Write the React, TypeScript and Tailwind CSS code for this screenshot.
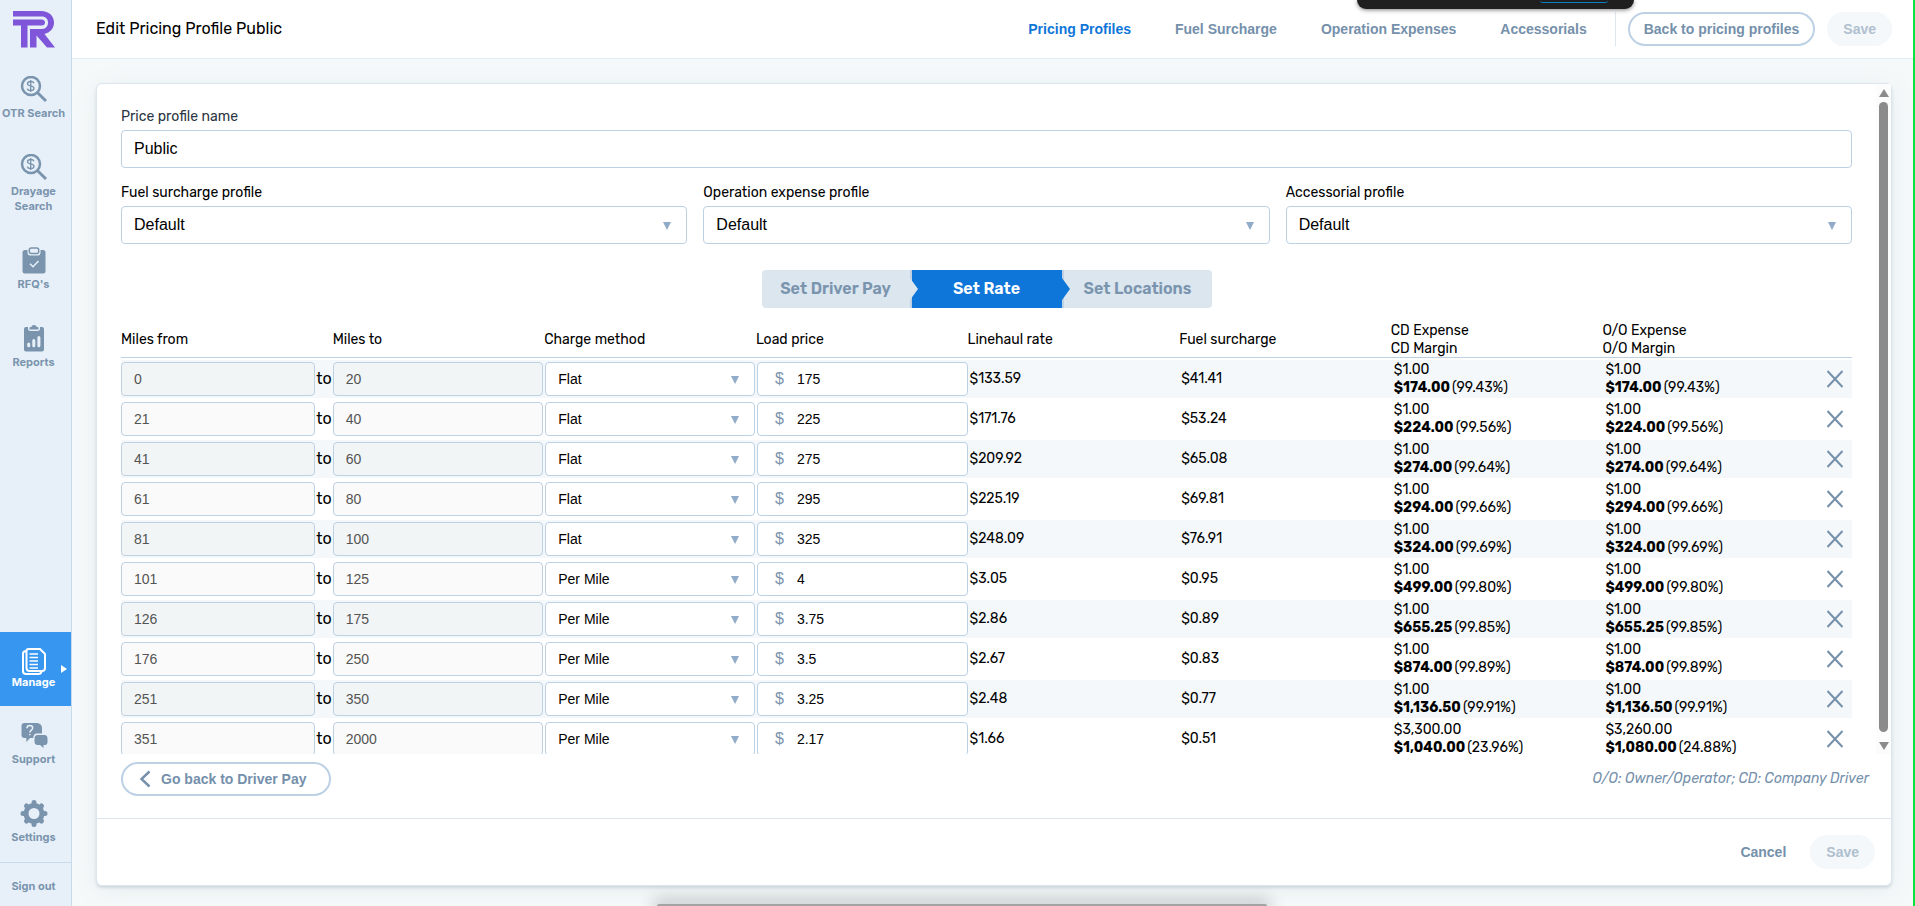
import type { ReactNode } from "react";

const NAV_LINKS = [
  { label: "Pricing Profiles", active: true },
  { label: "Fuel Surcharge", active: false },
  { label: "Operation Expenses", active: false },
  { label: "Accessorials", active: false },
];

const PROFILE_SELECTS = [
  { id: "fuel-profile", label: "Fuel surcharge profile" },
  { id: "operation-profile", label: "Operation expense profile" },
  { id: "accessorial-profile", label: "Accessorial profile" },
];

const ROWS = [
  { from: 0, to: 20, method: "Flat", price: "175", linehaul: "$133.59", fuel: "$41.41", cd: ["$1.00", "$174.00", "99.43%"], oo: ["$1.00", "$174.00", "99.43%"] },
  { from: 21, to: 40, method: "Flat", price: "225", linehaul: "$171.76", fuel: "$53.24", cd: ["$1.00", "$224.00", "99.56%"], oo: ["$1.00", "$224.00", "99.56%"] },
  { from: 41, to: 60, method: "Flat", price: "275", linehaul: "$209.92", fuel: "$65.08", cd: ["$1.00", "$274.00", "99.64%"], oo: ["$1.00", "$274.00", "99.64%"] },
  { from: 61, to: 80, method: "Flat", price: "295", linehaul: "$225.19", fuel: "$69.81", cd: ["$1.00", "$294.00", "99.66%"], oo: ["$1.00", "$294.00", "99.66%"] },
  { from: 81, to: 100, method: "Flat", price: "325", linehaul: "$248.09", fuel: "$76.91", cd: ["$1.00", "$324.00", "99.69%"], oo: ["$1.00", "$324.00", "99.69%"] },
  { from: 101, to: 125, method: "Per Mile", price: "4", linehaul: "$3.05", fuel: "$0.95", cd: ["$1.00", "$499.00", "99.80%"], oo: ["$1.00", "$499.00", "99.80%"] },
  { from: 126, to: 175, method: "Per Mile", price: "3.75", linehaul: "$2.86", fuel: "$0.89", cd: ["$1.00", "$655.25", "99.85%"], oo: ["$1.00", "$655.25", "99.85%"] },
  { from: 176, to: 250, method: "Per Mile", price: "3.5", linehaul: "$2.67", fuel: "$0.83", cd: ["$1.00", "$874.00", "99.89%"], oo: ["$1.00", "$874.00", "99.89%"] },
  { from: 251, to: 350, method: "Per Mile", price: "3.25", linehaul: "$2.48", fuel: "$0.77", cd: ["$1.00", "$1,136.50", "99.91%"], oo: ["$1.00", "$1,136.50", "99.91%"] },
  { from: 351, to: 2000, method: "Per Mile", price: "2.17", linehaul: "$1.66", fuel: "$0.51", cd: ["$3,300.00", "$1,040.00", "23.96%"], oo: ["$3,260.00", "$1,080.00", "24.88%"] },
];

function Logo() {
  return (
    <svg viewBox="0 0 42 37" className="h-[37px] w-[42px]" fill="#7f56d9" aria-hidden="true">
      <path d="M0 0H28C36 0 41 5 41 11.5C41 17.5 37 21.5 31.5 23L42 36.5H34L23.5 24.5V36.5H17V18H29C33 18 35 15 35 11.5C35 8 32.5 5.5 29 5.5H0Z" />
      <path d="M0 8.5H28.5C31 8.5 32 10 32 11.5C32 13.5 31 14.5 28.5 14.5H14.5V36.5H8V14.5H0Z" />
    </svg>
  );
}

function SearchDollarIcon() {
  return (
    <svg viewBox="0 0 28 28" className="h-7 w-7" fill="none" stroke="currentColor" aria-hidden="true">
      <circle cx="11" cy="10" r="9" strokeWidth="2.5" />
      <path d="M17.6 16.8L26 25" strokeWidth="3" />
      <path d="M10.7 4V16M14 7.2C13.6 6 12.3 5.5 10.7 5.5C8.8 5.5 7.5 6.3 7.5 7.7C7.5 10.7 14 9.2 14 12.3C14 13.8 12.6 14.6 10.7 14.6C9 14.6 7.6 13.9 7.3 12.6" strokeWidth="1.3" />
    </svg>
  );
}

function ClipboardCheckIcon() {
  return (
    <svg viewBox="0 0 28 28" className="h-7 w-7" aria-hidden="true">
      <rect x="2.5" y="3" width="23" height="23.5" rx="2.5" fill="currentColor" />
      <rect x="7.5" y="-1" width="13" height="9.5" rx="3" fill="#e7f0f8" />
      <rect x="9.3" y="1.1" width="9.4" height="5.3" rx="2" fill="none" stroke="currentColor" strokeWidth="1.5" />
      <path d="M10 16.8L13 19.7L18.5 14" fill="none" stroke="#e7f0f8" strokeWidth="1.5" />
    </svg>
  );
}

function ClipboardChartIcon() {
  return (
    <svg viewBox="0 0 28 28" className="h-7 w-7" aria-hidden="true">
      <rect x="4" y="2" width="20" height="24.5" rx="2" fill="currentColor" />
      <path d="M8 0H20V3.5Q20 6 17.5 6H10.5Q8 6 8 3.5Z" fill="#e7f0f8" />
      <path d="M9.5 4.5V3Q9.5 2 10.5 2H11.3Q11.7 0 14 0T16.7 2H17.5Q18.5 2 18.5 3V4.5Z" fill="currentColor" />
      <path d="M8.7 19V20.7M13.8 15.5V20.7M18.9 12.5V20.7" stroke="#e7f0f8" strokeWidth="3" strokeLinecap="round" />
    </svg>
  );
}

function DocumentsIcon() {
  return (
    <svg viewBox="0 0 28 28" className="h-7 w-7" fill="none" stroke="currentColor" strokeWidth="2" aria-hidden="true">
      <path d="M8.5 1H20L25 6V20Q25 23 22 23H9.5Q6.5 23 6.5 20V3Q6.5 1 8.5 1Z" />
      <path d="M6.5 3Q3 3 3 5.5V23Q3 26 6 26H18.5Q21 26 21.5 23.5" />
      <path d="M9.5 6H18M9.5 9.5H18M9.5 13H18M9.5 16.5H18M9.5 20H18" strokeWidth="1.6" />
    </svg>
  );
}

function SupportIcon() {
  return (
    <svg viewBox="0 0 28 28" className="h-7 w-7" fill="currentColor" aria-hidden="true">
      <path d="M4.5 1H17.5Q22 2 22 6V11.5H16Q13.5 12 13.2 16H10L6.3 20V16H4.5Q1.5 16 1.5 13V4Q1.5 1 4.5 1Z" />
      <path d="M17 13H25Q27.5 13.5 27.5 16V20Q27.5 23 25 23H23.5V26L20 23H17Q14.5 22.5 14.5 20V16Q14.5 13.5 17 13Z" />
      <path d="M7 6.2C7 4.2 8.2 3.5 9.8 3.5C11.5 3.5 12.7 4.5 12.7 6C12.7 8 10 8.2 9.8 10.5M9.8 12V13.3" fill="none" stroke="#e7f0f8" strokeWidth="1.5" />
    </svg>
  );
}

function GearIcon() {
  return (
    <svg viewBox="0 0 28 28" className="h-7 w-7" fill="none" stroke="currentColor" aria-hidden="true">
      <circle cx="14" cy="13.5" r="8" strokeWidth="5" />
      <g strokeWidth="5" strokeLinecap="round">
        <path d="M14 2.5V4M14 23V24.5M3 13.5H4.5M23.5 13.5H25" />
        <path d="M6.5 6L7 6.5M21 20.5L21.5 21M6.5 21L7 20.5M21 6.5L21.5 6" />
      </g>
    </svg>
  );
}

function SideItem({ icon, label }: { icon: ReactNode; label: string }) {
  return (
    <a href="#" className="flex flex-col items-center pt-4 pr-1 pb-[17px] text-center">
      {icon}
      <span className="mt-0.5 leading-[15px]">{label}</span>
    </a>
  );
}

function Sidebar() {
  return (
    <nav className="flex w-[72px] shrink-0 flex-col border-r border-[#c9dbe9] bg-[#e7f0f8] font-['Inter',sans-serif] text-[11px] font-bold text-[#7a94ae]">
      <a href="#" aria-label="Home" className="flex h-[60px] justify-center pt-[11px] pr-1">
        <Logo />
      </a>
      <SideItem icon={<SearchDollarIcon />} label="OTR Search" />
      <SideItem icon={<SearchDollarIcon />} label="Drayage Search" />
      <SideItem icon={<ClipboardCheckIcon />} label="RFQ's" />
      <SideItem icon={<ClipboardChartIcon />} label="Reports" />
      <div className="mt-auto">
        <a href="#" className="relative flex h-[74px] flex-col items-center bg-[#3797f0] pt-4 pr-1 text-white">
          <DocumentsIcon />
          <span className="-mt-px leading-[15px]">Manage</span>
          <span className="absolute top-[33px] right-1 border-y-4 border-l-[6px] border-y-transparent border-l-white" />
        </a>
        <SideItem icon={<SupportIcon />} label="Support" />
        <SideItem icon={<GearIcon />} label="Settings" />
        <a href="#" className="flex h-11 items-center justify-center border-t border-[#c9dbe9] pt-1 pr-1">
          Sign out
        </a>
      </div>
    </nav>
  );
}

function Caret() {
  return (
    <span className="pointer-events-none absolute top-1/2 right-4 -mt-[3px] border-x-4 border-t-8 border-x-transparent border-t-[#8fabc7]" />
  );
}

function Header() {
  return (
    <header className="flex h-[59px] shrink-0 items-center border-b border-[#e3edf6] bg-white pr-[23px] pl-6">
      <h1 className="text-base">Edit Pricing Profile Public</h1>
      <nav className="ml-auto flex gap-11 font-['Liberation_Sans',Arial,sans-serif] text-sm font-bold text-[#7590ab]">
        {NAV_LINKS.map((l) => (
          <a key={l.label} href="#" className={l.active ? "text-[#0f76d9]" : ""}>
            {l.label}
          </a>
        ))}
      </nav>
      <div className="ml-7 flex gap-3 border-l border-[#dce6ef] pl-3 font-['Liberation_Sans',Arial,sans-serif] text-sm font-bold">
        <button className="h-[34px] rounded-full border-2 border-[#bdd1e5] px-3.5 text-[#7590ab]">
          Back to pricing profiles
        </button>
        <button className="h-[34px] rounded-full bg-[#f4f8fa] px-4 text-[#b0bfcf]">Save</button>
      </div>
    </header>
  );
}

function Steps() {
  return (
    <div className="mx-auto mt-[26px] grid h-[38px] w-[450px] grid-cols-3 overflow-hidden rounded text-base font-semibold">
      <button className="border-r-2 border-[#bfd1e2] bg-[#dbe6ef] text-[#7a94ae]">Set Driver Pay</button>
      <button className="relative bg-[#0f76d9] text-white">
        Set Rate
        <span className="absolute top-2 -left-0.5 border-y-[11px] border-l-[8px] border-y-transparent border-l-[#dbe6ef]" />
        <span className="absolute top-2 -right-2 z-10 border-y-[11px] border-l-8 border-y-transparent border-l-[#0f76d9]" />
      </button>
      <button className="border-l-2 border-[#bfd1e2] bg-[#dbe6ef] text-[#7a94ae]">Set Locations</button>
    </div>
  );
}

function Margin({ values }: { values: string[] }) {
  return (
    <>
      {values[0]}
      <br />
      <b className="mr-0.5">{values[1]}</b>({values[2]})
    </>
  );
}

function RateTable() {
  return (
    <table className="mt-3 w-full table-fixed border-separate border-spacing-x-0 border-spacing-y-0.5 text-left text-sm leading-[18px]">
      <thead>
        <tr className="[&>th]:h-9 [&>th]:font-normal [&>th]:shadow-[inset_0_-1px_0_#bdd1e5]">
          <th>Miles from</th>
          <th>Miles to</th>
          <th>Charge method</th>
          <th>Load price</th>
          <th>Linehaul rate</th>
          <th>Fuel surcharge</th>
          <th>CD Expense<br />CD Margin</th>
          <th>O/O Expense<br />O/O Margin</th>
          <th className="w-[38px]" aria-label="Remove" />
        </tr>
      </thead>
      <tbody>
        {ROWS.map((r) => (
          <tr key={r.from} className="h-[38px] odd:bg-[#f4f8fa]">
            <td>
              <div className="flex items-center">
                <input
                  disabled
                  aria-label="Miles from"
                  defaultValue={r.from}
                  className="h-[34px] w-0 flex-1 rounded border border-[#bdd1e5] bg-[#efefef]/30 px-3 font-['Liberation_Sans',Arial,sans-serif] text-[#545454]"
                />
                <span className="px-px text-base">to</span>
              </div>
            </td>
            <td className="pr-px">
              <input
                disabled
                aria-label="Miles to"
                defaultValue={r.to}
                className="block h-[34px] w-full rounded border border-[#bdd1e5] bg-[#efefef]/30 px-3 font-['Liberation_Sans',Arial,sans-serif] text-[#545454]"
              />
            </td>
            <td className="px-px">
              <div className="relative">
                <select
                  aria-label="Charge method"
                  defaultValue={r.method}
                  className="block h-[34px] w-full appearance-none rounded border border-[#bdd1e5] bg-white px-3 font-['Liberation_Sans',Arial,sans-serif]"
                >
                  <option>Flat</option>
                  <option>Per Mile</option>
                </select>
                <Caret />
              </div>
            </td>
            <td className="pl-px">
              <label className="flex h-[34px] items-center rounded border border-[#bdd1e5] bg-white pl-[17px] font-['Liberation_Sans',Arial,sans-serif]">
                <span className="w-[22px] text-base text-[#7a94ae]">$</span>
                <input aria-label="Load price" defaultValue={r.price} className="w-0 flex-1 outline-none" />
              </label>
            </td>
            <td className="pl-0.5">{r.linehaul}</td>
            <td className="pl-0.5">{r.fuel}</td>
            <td className="pl-[3px]"><Margin values={r.cd} /></td>
            <td className="pl-[3px]"><Margin values={r.oo} /></td>
            <td>
              <button aria-label="Remove row" className="ml-[13px] block text-[#7590ab]">
                <svg viewBox="0 0 16 18" className="h-[18px] w-4" fill="none" stroke="currentColor" strokeWidth="2">
                  <path d="M0.5 1L15.5 17M15.5 1L0.5 17" />
                </svg>
              </button>
            </td>
          </tr>
        ))}
      </tbody>
    </table>
  );
}

function Scrollbar() {
  return (
    <div className="flex w-[15px] shrink-0 flex-col items-center bg-[#fcfcfc] pt-[5px] pb-1">
      <span className="border-x-[5px] border-b-[8px] border-x-transparent border-b-[#8b8b8b]" />
      <span className="mt-[5px] mb-2.5 w-[9px] flex-1 rounded-full bg-[#8b8b8b]" />
      <span className="border-x-[5px] border-t-[8px] border-x-transparent border-t-[#8b8b8b]" />
    </div>
  );
}

export default function App() {
  return (
    <div className="relative flex h-screen overflow-hidden bg-[#f5f9fa] font-['Rubik','Roboto',sans-serif] text-black">
      <Sidebar />
      <div className="flex min-w-0 flex-1 flex-col">
        <Header />
        <main className="mt-6 mr-[23px] mb-5 ml-6 flex min-h-0 flex-1 flex-col rounded-md border border-[#dce6ef] bg-white shadow-[0_2px_3px_rgba(120,140,160,0.25),0_4px_24px_rgba(120,140,150,0.1)]">
          <div className="flex min-h-0 flex-1 overflow-hidden">
            <div className="min-w-0 flex-1 overflow-hidden px-6 pt-[23px]">
              <label htmlFor="profile-name" className="block text-sm leading-5 text-[#2b3642]">
                Price profile name
              </label>
              <input
                id="profile-name"
                defaultValue="Public"
                className="mt-[3px] block h-[38px] w-full rounded border border-[#bdd1e5] px-3 font-['Liberation_Sans',Arial,sans-serif] text-base"
              />
              <div className="mt-[15px] grid grid-cols-3 gap-4">
                {PROFILE_SELECTS.map((p) => (
                  <div key={p.id}>
                    <label htmlFor={p.id} className="block text-sm leading-5">{p.label}</label>
                    <div className="relative mt-[3px]">
                      <select
                        id={p.id}
                        className="block h-[38px] w-full appearance-none rounded border border-[#bdd1e5] bg-white px-3 font-['Liberation_Sans',Arial,sans-serif] text-base"
                      >
                        <option>Default</option>
                      </select>
                      <Caret />
                    </div>
                  </div>
                ))}
              </div>
              <Steps />
              <RateTable />
            </div>
            <Scrollbar />
          </div>
          <div className="flex items-center justify-between pt-2 pr-[22px] pb-[22px] pl-6 text-sm text-[#7590ab]">
            <button className="flex h-[34px] items-center gap-2.5 rounded-full border-2 border-[#bdd1e5] pr-[22px] pl-4 font-['Liberation_Sans',Arial,sans-serif] font-bold">
              <svg viewBox="0 0 12 18" className="h-[18px] w-3" fill="none" stroke="currentColor" strokeWidth="2.4" aria-hidden="true">
                <path d="M10.5 1.5L2.5 9L10.5 16.5" />
              </svg>
              Go back to Driver Pay
            </button>
            <em>O/O: Owner/Operator; CD: Company Driver</em>
          </div>
          <div className="flex h-[67px] items-center justify-end gap-6 border-t border-[#dce6ef] pr-4 font-['Liberation_Sans',Arial,sans-serif] text-sm font-bold">
            <button className="text-[#7590ab]">Cancel</button>
            <button className="h-[34px] rounded-full bg-[#f4f8fa] px-4 text-[#b0bfcf]">Save</button>
          </div>
        </main>
      </div>

      {/* capture bar, dock and frame edge that overlap the window */}
      <div className="absolute top-0 left-[1357px] h-[9px] w-[277px] rounded-b-xl bg-[#1f1f1f] shadow-[0_1px_4px_rgba(0,0,0,0.5)]">
        <div className="absolute top-0 right-[26px] h-[3px] w-[68px] rounded-b-full border-b border-[#0b7fc7]" />
      </div>
      <div className="absolute bottom-0 left-[657px] h-0.5 w-[610px] rounded-t bg-[#a3a3a3] shadow-[0_0_16px_4px_rgba(0,0,0,0.25)]" />
      <div className="absolute inset-y-0 right-0 w-0.5 bg-[#0be43a]" />
    </div>
  );
}
